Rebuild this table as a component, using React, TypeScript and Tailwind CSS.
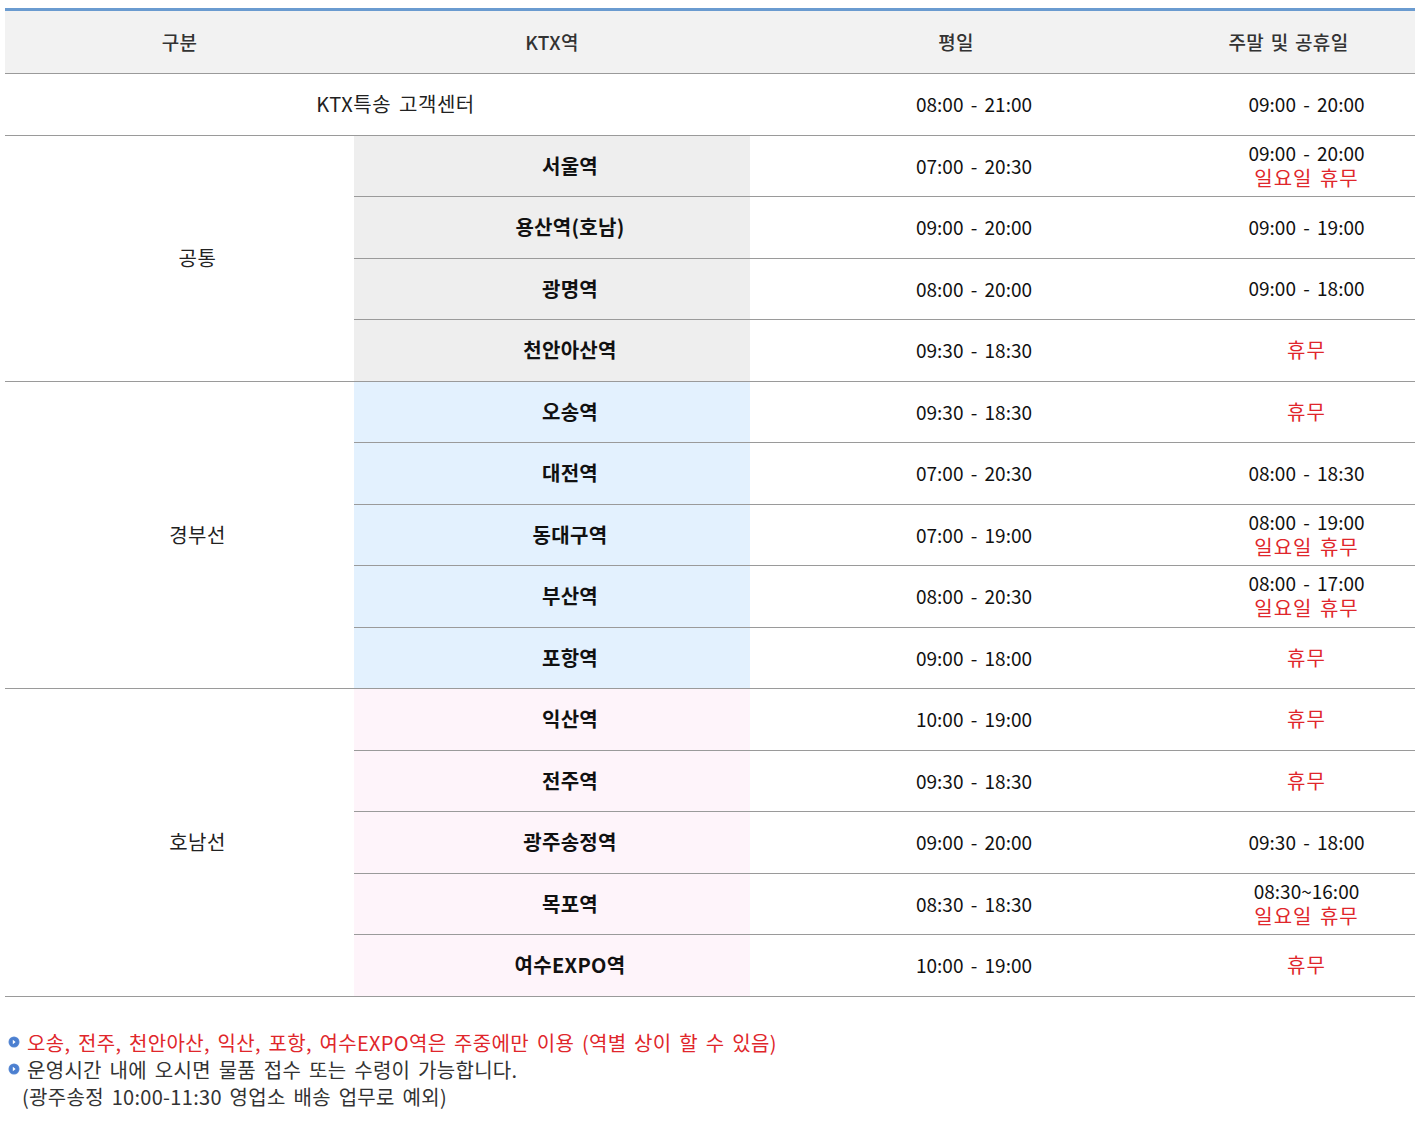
import React from 'react';

type Row = { name: string; weekday: string; weekend: string; closedSunday?: boolean };

const groups: { label: string; bg: string; rows: Row[] }[] = [
    {
        label: '공통',
        bg: 'bg-[#eeeeee]',
        rows: [
            { name: '서울역', weekday: '07:00 - 20:30', weekend: '09:00 - 20:00', closedSunday: true },
            { name: '용산역(호남)', weekday: '09:00 - 20:00', weekend: '09:00 - 19:00' },
            { name: '광명역', weekday: '08:00 - 20:00', weekend: '09:00 - 18:00' },
            { name: '천안아산역', weekday: '09:30 - 18:30', weekend: '' },
        ],
    },
    {
        label: '경부선',
        bg: 'bg-[#e3f1fe]',
        rows: [
            { name: '오송역', weekday: '09:30 - 18:30', weekend: '' },
            { name: '대전역', weekday: '07:00 - 20:30', weekend: '08:00 - 18:30' },
            { name: '동대구역', weekday: '07:00 - 19:00', weekend: '08:00 - 19:00', closedSunday: true },
            { name: '부산역', weekday: '08:00 - 20:30', weekend: '08:00 - 17:00', closedSunday: true },
            { name: '포항역', weekday: '09:00 - 18:00', weekend: '' },
        ],
    },
    {
        label: '호남선',
        bg: 'bg-[#fef4fa]',
        rows: [
            { name: '익산역', weekday: '10:00 - 19:00', weekend: '' },
            { name: '전주역', weekday: '09:30 - 18:30', weekend: '' },
            { name: '광주송정역', weekday: '09:00 - 20:00', weekend: '09:30 - 18:00' },
            { name: '목포역', weekday: '08:30 - 18:30', weekend: '08:30~16:00', closedSunday: true },
            { name: '여수EXPO역', weekday: '10:00 - 19:00', weekend: '' },
        ],
    },
];

const Bullet = () => (
    <svg width="12" height="12" viewBox="0 0 12 12" className="shrink-0">
        <circle cx="6" cy="6" r="5.5" fill="#5a8ad4" />
        <circle cx="6" cy="6" r="4.5" fill="#4b7fd0" />
        <path d="M4.8 3.8 L7.6 6 L4.8 8.2 Z" fill="#ffffff" />
    </svg>
);

const Closed = ({ children }: { children: React.ReactNode }) => (
    <span className="text-[20px] leading-[25px] text-[#e0262b] tracking-[1px] [word-spacing:2px]">{children}</span>
);

const WeekendCell = ({ row }: { row: Row }) => {
    if (!row.weekend) return <Closed>휴무</Closed>;
    return (
        <div className="flex flex-col items-center -mt-[2px] leading-[25px]">
            <span>{row.weekend}</span>
            {row.closedSunday && <Closed>일요일 휴무</Closed>}
        </div>
    );
};

export default function App() {
    const td = 'h-[61.5px] border-b border-[#9a9a9a] pl-[36px] text-center align-middle';
    const th = 'h-[64px] border-b border-[#9a9a9a] font-medium tracking-[0.3px] [word-spacing:2px]';

    return (
        <div className="bg-white pt-[8px] px-[5px] pb-[20px] text-[19px] text-[#111]" style={{ fontFamily: '"Noto Sans CJK KR", "Noto Sans", sans-serif' }}>
            <table className="w-[1410px] table-fixed border-collapse border-t-[3px] border-[#6a9bd0] [word-spacing:3px]">
                <colgroup>
                    <col className="w-[349px]" />
                    <col className="w-[396px]" />
                    <col className="w-[412px]" />
                    <col className="w-[253px]" />
                </colgroup>
                <thead>
                    <tr className="bg-[#f2f2f2] text-[#333]">
                        <th className={th}>구분</th>
                        <th className={th}>KTX역</th>
                        <th className={th}>평일</th>
                        <th className={th}>주말 및 공휴일</th>
                    </tr>
                </thead>
                <tbody>
                    <tr>
                        <td colSpan={2} className={`${td} text-[20px] tracking-[0.5px] text-[#222]`}>KTX특송 고객센터</td>
                        <td className={td}>08:00 - 21:00</td>
                        <td className={td}>09:00 - 20:00</td>
                    </tr>
                    {groups.map((g) =>
                        g.rows.map((row, i) => (
                            <tr key={row.name}>
                                {i === 0 && (
                                    <td rowSpan={g.rows.length} className={`${td} text-[20px] tracking-[0.5px] text-[#222]`}>
                                        {g.label}
                                    </td>
                                )}
                                <td className={`${td} ${g.bg} text-[20px] font-bold tracking-[0.3px]`}>{row.name}</td>
                                <td className={td}>{row.weekday}</td>
                                <td className={td}>
                                    <WeekendCell row={row} />
                                </td>
                            </tr>
                        ))
                    )}
                </tbody>
            </table>

            <div className="mt-[32px] pl-[3px] text-[20px] leading-[27px] tracking-[0.3px] [word-spacing:3px] text-[#333]">
                <div className="flex items-center gap-[7px] text-[#e0262b]">
                    <Bullet />
                    <span>오송, 전주, 천안아산, 익산, 포항, 여수EXPO역은 주중에만 이용 (역별 상이 할 수 있음)</span>
                </div>
                <div className="flex items-center gap-[7px]">
                    <Bullet />
                    <span>운영시간 내에 오시면 물품 접수 또는 수령이 가능합니다.</span>
                </div>
                <div className="pl-[14px]">(광주송정 10:00-11:30 영업소 배송 업무로 예외)</div>
            </div>
        </div>
    );
}
